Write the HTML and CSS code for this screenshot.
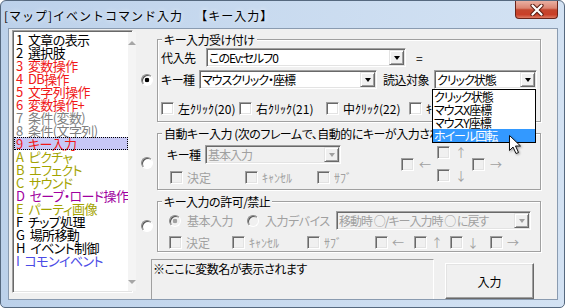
FILE: index.html
```html
<!DOCTYPE html>
<html>
<head>
<meta charset="utf-8">
<link rel="stylesheet" href="styles.css">
</head>
<body>
<div class="window">
  <div class="titlebar">
    <span class="title">[マップ]イベントコマンド入力　<span class="sub">【キー入力】</span></span>
    <span class="close">
      <svg width="14" height="12" viewBox="0 0 14 12">
        <path d="M2.5 1.5 L11.5 10.5 M11.5 1.5 L2.5 10.5" stroke="#5a1d12" stroke-width="4.2" stroke-linecap="round"/>
        <path d="M2.5 1.5 L11.5 10.5 M11.5 1.5 L2.5 10.5" stroke="#fff" stroke-width="2.2" stroke-linecap="round"/>
      </svg>
    </span>
  </div>

  <div class="client">
    <div class="cmdlist">
      <ul class="items">
        <li>1 文章の表示</li>
        <li>2 選択肢</li>
        <li class="red">3 変数操作</li>
        <li class="red">4 DB操作</li>
        <li class="red">5 文字列操作</li>
        <li class="red">6 変数操作+</li>
        <li class="gray">7 条件(変数)</li>
        <li class="gray">8 条件(文字列)</li>
        <li class="red selected">9 キー入力</li>
        <li class="olive">A ピクチャ</li>
        <li class="olive">B エフェクト</li>
        <li class="olive">C サウンド</li>
        <li class="purple">D セーブ・ロード操作</li>
        <li class="olive">E パーティ画像</li>
        <li>F チップ処理</li>
        <li>G 場所移動</li>
        <li>H イベント制御</li>
        <li class="blue">I コモンイベント</li>
      </ul>
      <div class="vscroll">
        <span class="sarrow up"></span>
        <span class="sarrow down"></span>
      </div>
    </div>

    <div class="main">
      <!-- key input accept -->
      <div class="section">
        <span class="radio on sel1"></span>
        <fieldset class="group">
          <legend>キー入力受け付け</legend>
          <div class="inner g1">
            <div class="row">
              <span class="label lbl-target">代入先</span>
              <span class="combo cmb-target"><span class="val">このEv:セルフ0</span><span class="drop"></span></span>
              <span class="eq">=</span>
            </div>
            <div class="row row-kind">
              <span class="label lbl-kind">キー種</span>
              <span class="combo cmb-kind"><span class="val">マウスクリック・座標</span><span class="drop"></span></span>
              <span class="label lbl-read">読込対象</span>
              <span class="combo cmb-read"><span class="val">クリック状態</span><span class="drop"></span></span>
            </div>
            <div class="row row-checks">
              <span class="chk w78"><span class="cb"></span>左ｸﾘｯｸ(20)</span>
              <span class="chk w87"><span class="cb"></span>右ｸﾘｯｸ(21)</span>
              <span class="chk w83"><span class="cb"></span>中ｸﾘｯｸ(22)</span>
              <span class="chk"><span class="cb"></span>ｷｰﾎﾞｰﾄﾞ</span>
            </div>
          </div>
        </fieldset>
      </div>

      <!-- auto key input -->
      <div class="section sec2">
        <span class="radio sel2"></span>
        <fieldset class="group">
          <legend>自動キー入力 (次のフレームで、自動的にキーが入力されます)</legend>
          <div class="inner g2">
            <div class="left">
              <div class="row">
                <span class="label lbl-kind2">キー種</span>
                <span class="combo disabled cmb-basic"><span class="val">基本入力</span><span class="drop"></span></span>
              </div>
              <div class="row row-checks2 off">
                <span class="chk w75"><span class="cb"></span>決定</span>
                <span class="chk w72"><span class="cb"></span>ｷｬﾝｾﾙ</span>
                <span class="chk"><span class="cb"></span>ｻﾌﾞ</span>
              </div>
            </div>
            <div class="cross off">
              <span class="chk c-up"><span class="cb"></span>↑</span>
              <span class="chk c-left"><span class="cb"></span>←</span>
              <span class="chk c-right"><span class="cb"></span>→</span>
              <span class="chk c-down"><span class="cb"></span>↓</span>
            </div>
          </div>
        </fieldset>
      </div>

      <!-- allow / forbid -->
      <div class="section sec3">
        <span class="radio sel3"></span>
        <fieldset class="group">
          <legend>キー入力の許可/禁止</legend>
          <div class="inner g3 off">
            <div class="row">
              <span class="opt w78"><span class="radio on"></span>基本入力</span>
              <span class="opt w89"><span class="radio"></span>入力デバイス</span>
              <span class="combo disabled cmb-back"><span class="val">移動時 ○/キー入力時 ○ に戻す</span><span class="drop"></span></span>
            </div>
            <div class="row row-checks3">
              <span class="chk w63"><span class="cb"></span>決定</span>
              <span class="chk w75"><span class="cb"></span>ｷｬﾝｾﾙ</span>
              <span class="chk w68"><span class="cb"></span>ｻﾌﾞ</span>
              <span class="chk w39"><span class="cb"></span>←</span>
              <span class="chk w36"><span class="cb"></span>↑</span>
              <span class="chk w40"><span class="cb"></span>↓</span>
              <span class="chk"><span class="cb"></span>→</span>
            </div>
          </div>
        </fieldset>
      </div>

      <div class="bottom">
        <div class="varname">※ここに変数名が表示されます</div>
        <button class="btn">入力</button>
      </div>
    </div>
  </div>

  <!-- opened dropdown of 読込対象 -->
  <ul class="popup">
    <li>クリック状態</li>
    <li>マウスX座標</li>
    <li>マウスY座標</li>
    <li class="hot">ホイール回転</li>
  </ul>

  <svg class="cursor" width="14" height="21" viewBox="0 0 14 21">
    <path d="M1.5 1.5 L1.5 16.5 L5 13 L8 19.5 L10.5 18.5 L7.5 12 L12.5 12 Z" fill="#fff" stroke="#111" stroke-width="1"/>
  </svg>
</div>
</body>
</html>
```

FILE: styles.css
```css
body{
    margin:0;
    font-family:"Noto Sans CJK JP","Noto Sans",sans-serif;
    font-size:12px;
    font-feature-settings:"palt";
    color:#000;
}

.window{
    position:relative;
    width:563px;
    height:306px;
    border:1px solid #56697f;
    border-radius:6px 6px 5px 5px;
    background:linear-gradient(90deg,#bcd1ea,#c8daef 45%,#d3e2f3);
    overflow:hidden;
}

.titlebar{
    height:27px;
    display:flex;
    justify-content:space-between;
    align-items:flex-start;
}
.title{
    padding:8px 0 0 3px;
    line-height:13px;
    font-feature-settings:normal;
    letter-spacing:1px;
    text-shadow:0 0 5px #fff;
}
.title .sub{margin-left:5px;}
.close{
    width:43px;
    height:18px;
    margin-right:6px;
    box-sizing:border-box;
    border:1px solid #6a241a;
    border-top:none;
    border-radius:0 0 4px 4px;
    background:linear-gradient(#eab0a2,#dc8572 42%,#c4462e 52%,#c93f28 80%,#dd7a63);
    display:flex;
    align-items:center;
    justify-content:center;
}

.client{
    width:550px;
    height:272px;
    box-sizing:border-box;
    margin-left:7px;
    border:1px solid #8a9bb0;
    background:#f0f0f0;
    display:flex;
    align-items:flex-start;
    padding:1px 0 0 3px;
    overflow:hidden;
}

/* command list */
.cmdlist{
    width:121px;
    height:263px;
    box-sizing:border-box;
    display:flex;
    border:1px solid;
    border-color:#a0a0a0 #fff #fff #a0a0a0;
    box-shadow:inset 1px 1px #696969, inset -1px -1px #e3e3e3;
    background:#fff;
    padding:1px;
}
.items{
    list-style:none;
    margin:0;
    padding:1px 0 0 0;
    flex:1;
    font-size:13px;
    letter-spacing:-0.6px;
    word-spacing:3px;
}
.items li{
    height:13px;
    line-height:13px;
    padding-left:2px;
    white-space:nowrap;
}
.red{color:#f01818;}
.gray{color:#808080;}
.olive{color:#a3a300;}
.purple{color:#a000a0;}
.blue{color:#4b4be6;}
.items li.selected{
    background:#c8c8f6;
    outline:1px dotted #000;
    outline-offset:-1px;
}
.vscroll{
    width:17px;
    background:#f4f4f4;
    display:flex;
    flex-direction:column;
    justify-content:space-between;
    align-items:center;
    padding:9px 0 7px;
    box-sizing:border-box;
}
.sarrow{
    width:0;
    height:0;
    border-left:4px solid transparent;
    border-right:4px solid transparent;
}
.sarrow.up{border-bottom:4px solid #a6a6a6;}
.sarrow.down{border-top:4px solid #a6a6a6;}

/* right side */
.main{
    margin-left:7px;
    width:401px;
    display:flex;
    flex-direction:column;
}
.section{
    display:flex;
    align-items:flex-start;
    margin-top:3px;
}
.sec2{margin-top:5px;}
.sec3{margin-top:5px;}

.radio{
    width:12px;
    height:12px;
    box-sizing:border-box;
    border-radius:50%;
    border:1px solid;
    border-color:#8a8a8a #fff #fff #8a8a8a;
    box-shadow:inset 1px 1px #555;
    background:#fff;
    flex:none;
}
.radio.on{
    background:radial-gradient(circle,#000 0 2px,#fff 2.6px);
}
.section > .radio{
    margin-left:1px;
    margin-right:4px;
}
.sel1{margin-top:41px;}
.sel2{margin-top:30px;}
.sel3{margin-top:25px;}

.group{
    width:384px;
    box-sizing:border-box;
    margin:0;
    padding:0;
    border:1px solid #a0a0a0;
    box-shadow:inset 1px 1px #fff, 1px 1px #fff;
    min-width:0;
}
.group legend{
    margin-left:4px;
    padding:0 2px;
    line-height:13px;
    background:#f0f0f0;
    white-space:nowrap;
    letter-spacing:-0.5px;
}

.inner{display:flex;flex-direction:column;}
.row{
    display:flex;
    align-items:center;
    white-space:nowrap;
}
.g1{padding:2px 0 6px 3px;}
.row-kind{margin-top:3px;}
.row-checks{margin-top:13px;}

.label{flex:none;line-height:13px;letter-spacing:-0.5px;}
.lbl-target{width:45px;}
.lbl-kind{width:38px;}
.lbl-read{width:51px;margin-left:6px;}
.lbl-kind2{width:38px;}
.eq{margin-left:10px;}

.combo{
    height:19px;
    box-sizing:border-box;
    border:1px solid;
    border-color:#a0a0a0 #fff #fff #a0a0a0;
    box-shadow:inset 1px 1px #696969, inset -1px -1px #e3e3e3;
    background:#fff;
    display:flex;
    align-items:center;
    padding:1px;
    flex:none;
}
.combo .val{
    flex:1;
    padding-left:1px;
    line-height:13px;
    letter-spacing:-1px;
}
.combo .drop{
    width:15px;
    height:15px;
    box-sizing:border-box;
    background:#f0f0f0;
    border:1px solid;
    border-color:#e3e3e3 #696969 #696969 #e3e3e3;
    box-shadow:inset 1px 1px #fff, inset -1px -1px #a0a0a0;
    display:flex;
    align-items:center;
    justify-content:center;
}
.combo .drop::after{
    content:"";
    border-left:3.5px solid transparent;
    border-right:3.5px solid transparent;
    border-top:4px solid #000;
    margin-top:1px;
}
.combo.disabled{background:#f0f0f0;color:#a0a0a0;}
.combo.disabled .drop::after{border-top-color:#a0a0a0;}
.cmb-target{width:200px;}
.cmb-kind{width:178px;}
.cmb-read{width:103px;}
.cmb-basic{width:136px;}
.cmb-back{width:195px;}

.chk{
    display:flex;
    align-items:center;
    line-height:13px;
    flex:none;
}
.cb{
    width:13px;
    height:13px;
    box-sizing:border-box;
    border:1px solid;
    border-color:#a0a0a0 #fff #fff #a0a0a0;
    box-shadow:inset 1px 1px #696969, inset -1px -1px #e3e3e3;
    background:#fff;
    margin-right:4px;
    flex:none;
}
.off{color:#a0a0a0;}
.off .cb{background:#f0f0f0;}
.off .radio{background:#f0f0f0;}
.off .radio.on{background:radial-gradient(circle,#a0a0a0 0 2px,#f0f0f0 2.6px);}

.w36{width:36px;}
.w39{width:39px;}
.w40{width:40px;}
.w63{width:63px;}
.w68{width:68px;}
.w72{width:72px;}
.w75{width:75px;}
.w78{width:78px;}
.w83{width:83px;}
.w87{width:87px;}
.w89{width:89px;}

.g2{
    flex-direction:row;
    padding:5px 0 5px 9px;
}
.left{width:234px;display:flex;flex-direction:column;}
.row-checks2{margin-top:7px;margin-left:3px;}
.cross{
    margin-top:1px;
    display:grid;
    grid-template-columns:36px 35px 35px;
    grid-template-rows:12px 11px 12px;
    align-items:start;
}
.c-up{grid-column:2;grid-row:1;}
.c-left{grid-column:1;grid-row:2;}
.c-right{grid-column:3;grid-row:2;}
.c-down{grid-column:2;grid-row:3;}
.cross .cb{margin-right:5px;}

.g3{padding:3px 0 2px 11px;}
.row-checks3{margin-top:6px;}
.opt{display:flex;align-items:center;flex:none;line-height:13px;letter-spacing:-0.5px;}
.opt .radio{margin-right:6px;}

/* bottom line */
.bottom{
    display:flex;
    align-items:flex-start;
    margin-top:7px;
}
.varname{
    margin-left:11px;
    width:283px;
    height:45px;
    box-sizing:border-box;
    border:1px solid;
    border-color:#a0a0a0 #fff #fff #a0a0a0;
    padding:2px 0 0 1px;
    line-height:13px;
    letter-spacing:-0.5px;
}
.btn{
    margin:4px 0 0 11px;
    width:89px;
    height:36px;
    box-sizing:border-box;
    font:inherit;
    border:1px solid;
    border-color:#fff #696969 #696969 #fff;
    box-shadow:inset -1px -1px #a0a0a0, inset 1px 1px #e3e3e3;
    background:#f0f0f0;
    padding:0;
}

/* open dropdown */
.popup{
    position:absolute;
    left:431px;
    top:88px;
    width:104px;
    margin:0;
    padding:0;
    list-style:none;
    border:1px solid #000;
    background:#fff;
    box-sizing:border-box;
    letter-spacing:-1px;
}
.popup li{
    height:13px;
    line-height:13px;
    padding-left:1px;
}
.popup li.hot{
    background:#3399ff;
    color:#fff;
}
.cursor{
    position:absolute;
    left:507px;
    top:133px;
    filter:drop-shadow(1px 1px 1px rgba(0,0,0,.35));
}
```
